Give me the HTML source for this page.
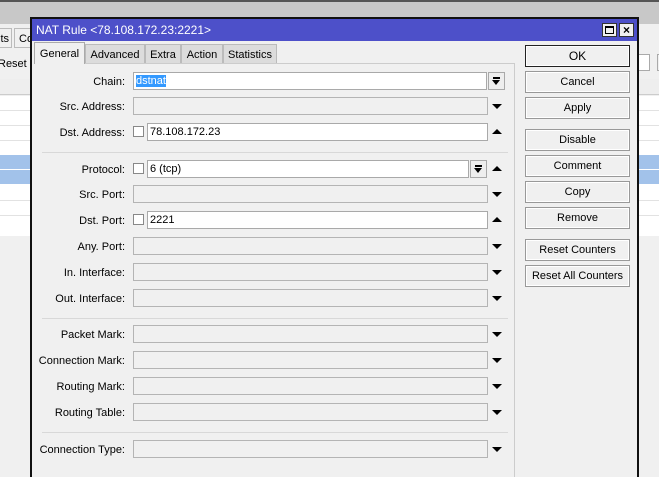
<!DOCTYPE html>
<html><head><style>
*{margin:0;padding:0;box-sizing:border-box}
html,body{width:659px;height:477px;overflow:hidden}
body{position:relative;background:#f0f0f0;font-family:Tahoma,"Liberation Sans",sans-serif;font-size:11px;color:#000}
.a{position:absolute}
.lbl{position:absolute;right:534px;text-align:right;white-space:nowrap;line-height:20px}
.in{position:absolute;height:18px;border:1px solid #a9a9a9;background:#fff;padding-left:2px;line-height:17px}
.dis{background:#f0f0f0;border-color:#b4b4b4}
.cb{position:absolute;width:11px;height:11px;border:1px solid #888;background:#fff}
.dn,.up{position:absolute;width:0;height:0;border-left:5px solid transparent;border-right:5px solid transparent}
.dn{border-top:5px solid #000}
.up{border-bottom:5px solid #000}
.db{position:absolute;width:17px;height:18px;border:1px solid #a9a9a9;background:#eee}
.db:before{content:"";position:absolute;left:4px;top:4px;width:7px;height:2px;background:#000}
.db:after{content:"";position:absolute;left:3px;top:7px;border-left:4px solid transparent;border-right:4px solid transparent;border-top:5px solid #000}
.btn{position:absolute;left:525px;width:105px;height:22px;border:1px solid #999;background:#f0f0f0;text-align:center;line-height:21px;box-shadow:inset 0 0 0 1px #fff}
.sep{position:absolute;left:42px;width:466px;height:1px;background:#d8d8d8}
.row{position:absolute;height:1px;background:#e2e2e2}
</style></head><body>
<div class="a" style="left:0;top:0;width:659px;height:2px;background:#555"></div>
<div class="a" style="left:0;top:2px;width:659px;height:22px;background:#c8c8c8"></div>
<div class="a" style="left:0;top:24px;width:659px;height:453px;background:#f0f0f0"></div>
<div class="a" style="left:-10px;top:28px;width:22px;height:20px;border:1px solid #bbb;background:#f0f0f0;line-height:20px;text-align:right;padding-right:2px">ts</div>
<div class="a" style="left:14px;top:28px;width:30px;height:20px;border:1px solid #bbb;background:#f0f0f0;line-height:20px;padding-left:4px">Co</div>
<div class="a" style="left:-2px;top:53px;width:40px;height:22px;line-height:22px">Reset C</div>
<div class="a" style="left:0;top:79px;width:30px;height:16px;background:#eee;border-bottom:1px solid #ccc"></div>
<div class="a" style="left:0;top:96px;width:30px;height:140px;background:#fff"></div>
<div class="a" style="left:0;top:155px;width:30px;height:14px;background:#a2c2ea"></div>
<div class="a" style="left:0;top:170px;width:30px;height:14px;background:#a2c2ea"></div>
<div class="row" style="left:0;top:110px;width:30px"></div><div class="row" style="left:0;top:125px;width:30px"></div><div class="row" style="left:0;top:140px;width:30px"></div><div class="row" style="left:0;top:200px;width:30px"></div><div class="row" style="left:0;top:215px;width:30px"></div>
<div class="a" style="left:638px;top:54px;width:12px;height:17px;border:1px solid #aaa;background:#fff"></div>
<div class="a" style="left:657px;top:54px;width:10px;height:17px;border:1px solid #aaa"></div>
<div class="a" style="left:638px;top:79px;width:21px;height:16px;background:#eee;border-bottom:1px solid #ccc"></div>
<div class="a" style="left:638px;top:96px;width:21px;height:140px;background:#fff"></div>
<div class="a" style="left:638px;top:155px;width:21px;height:14px;background:#a2c2ea"></div>
<div class="a" style="left:638px;top:170px;width:21px;height:14px;background:#a2c2ea"></div>
<div class="row" style="left:638px;top:110px;width:21px"></div><div class="row" style="left:638px;top:125px;width:21px"></div><div class="row" style="left:638px;top:140px;width:21px"></div><div class="row" style="left:638px;top:200px;width:21px"></div><div class="row" style="left:638px;top:215px;width:21px"></div>

<div class="a" style="left:30px;top:17px;width:609px;height:470px;border:2px solid #111;border-bottom:none;background:#f0f0f0"></div>
<div class="a" style="left:32px;top:19px;width:605px;height:22px;background:#4d50c9;color:#fff;font-size:12px;line-height:23px;padding-left:4px">NAT Rule &lt;78.108.172.23:2221&gt;</div>
<div class="a" style="left:602px;top:23px;width:15px;height:14px;background:#f0f0f0;border:1px solid #333"><div class="a" style="left:2px;top:2px;width:9px;height:8px;border:1px solid #000;border-top-width:2px"></div></div>
<div class="a" style="left:619px;top:23px;width:15px;height:14px;background:#f0f0f0;border:1px solid #333;font-size:12px;font-weight:bold;line-height:12px;text-align:center">×</div>

<div class="a" style="left:34px;top:42px;width:51px;height:22px;background:#f0f0f0;border:1px solid #aaa;border-bottom:none;line-height:23px;text-align:center">General</div>
<div class="a" style="left:85px;top:44px;width:60px;height:20px;background:#dcdcdc;border:1px solid #bbb;line-height:20px;text-align:center">Advanced</div>
<div class="a" style="left:145px;top:44px;width:36px;height:20px;background:#dcdcdc;border:1px solid #bbb;line-height:20px;text-align:center">Extra</div>
<div class="a" style="left:181px;top:44px;width:42px;height:20px;background:#dcdcdc;border:1px solid #bbb;line-height:20px;text-align:center">Action</div>
<div class="a" style="left:223px;top:44px;width:54px;height:20px;background:#dcdcdc;border:1px solid #bbb;line-height:20px;text-align:center">Statistics</div>
<div class="a" style="left:85px;top:63px;width:430px;height:1px;background:#ccc"></div>
<div class="a" style="left:514px;top:64px;width:1px;height:413px;background:#ccc"></div>

<div class="lbl" style="top:72px">Chain:</div>
<div class="in" style="left:133px;top:72px;width:354px"><span style="background:#3399ff;color:#fff">dstnat</span></div>
<div class="db" style="left:488px;top:72px"></div>

<div class="lbl" style="top:97px">Src. Address:</div>
<div class="in dis" style="left:133px;top:97px;width:355px"></div><div class="dn" style="left:492px;top:104px"></div>

<div class="lbl" style="top:123px">Dst. Address:</div>
<div class="cb" style="left:133px;top:126px"></div>
<div class="in" style="left:147px;top:123px;width:341px">78.108.172.23</div><div class="up" style="left:492px;top:129px"></div>

<div class="sep" style="top:152px"></div>

<div class="lbl" style="top:160px">Protocol:</div>
<div class="cb" style="left:133px;top:163px"></div>
<div class="in" style="left:147px;top:160px;width:322px">6 (tcp)</div>
<div class="db" style="left:470px;top:160px"></div><div class="up" style="left:492px;top:166px"></div>

<div class="lbl" style="top:185px">Src. Port:</div>
<div class="in dis" style="left:133px;top:185px;width:355px"></div><div class="dn" style="left:492px;top:192px"></div>

<div class="lbl" style="top:211px">Dst. Port:</div>
<div class="cb" style="left:133px;top:214px"></div>
<div class="in" style="left:147px;top:211px;width:341px">2221</div><div class="up" style="left:492px;top:217px"></div>

<div class="lbl" style="top:237px">Any. Port:</div>
<div class="in dis" style="left:133px;top:237px;width:355px"></div><div class="dn" style="left:492px;top:244px"></div>
<div class="lbl" style="top:263px">In. Interface:</div>
<div class="in dis" style="left:133px;top:263px;width:355px"></div><div class="dn" style="left:492px;top:270px"></div>
<div class="lbl" style="top:289px">Out. Interface:</div>
<div class="in dis" style="left:133px;top:289px;width:355px"></div><div class="dn" style="left:492px;top:296px"></div>

<div class="sep" style="top:318px"></div>

<div class="lbl" style="top:325px">Packet Mark:</div>
<div class="in dis" style="left:133px;top:325px;width:355px"></div><div class="dn" style="left:492px;top:332px"></div>
<div class="lbl" style="top:351px">Connection Mark:</div>
<div class="in dis" style="left:133px;top:351px;width:355px"></div><div class="dn" style="left:492px;top:358px"></div>
<div class="lbl" style="top:377px">Routing Mark:</div>
<div class="in dis" style="left:133px;top:377px;width:355px"></div><div class="dn" style="left:492px;top:384px"></div>
<div class="lbl" style="top:403px">Routing Table:</div>
<div class="in dis" style="left:133px;top:403px;width:355px"></div><div class="dn" style="left:492px;top:410px"></div>

<div class="sep" style="top:432px"></div>

<div class="lbl" style="top:440px">Connection Type:</div>
<div class="in dis" style="left:133px;top:440px;width:355px"></div><div class="dn" style="left:492px;top:447px"></div>

<div class="btn" style="top:45px;border:1px solid #222;font-size:12px">OK</div>
<div class="btn" style="top:71px">Cancel</div>
<div class="btn" style="top:97px">Apply</div>
<div class="btn" style="top:129px">Disable</div>
<div class="btn" style="top:155px">Comment</div>
<div class="btn" style="top:181px">Copy</div>
<div class="btn" style="top:207px">Remove</div>
<div class="btn" style="top:239px">Reset Counters</div>
<div class="btn" style="top:265px">Reset All Counters</div>
</body></html>
